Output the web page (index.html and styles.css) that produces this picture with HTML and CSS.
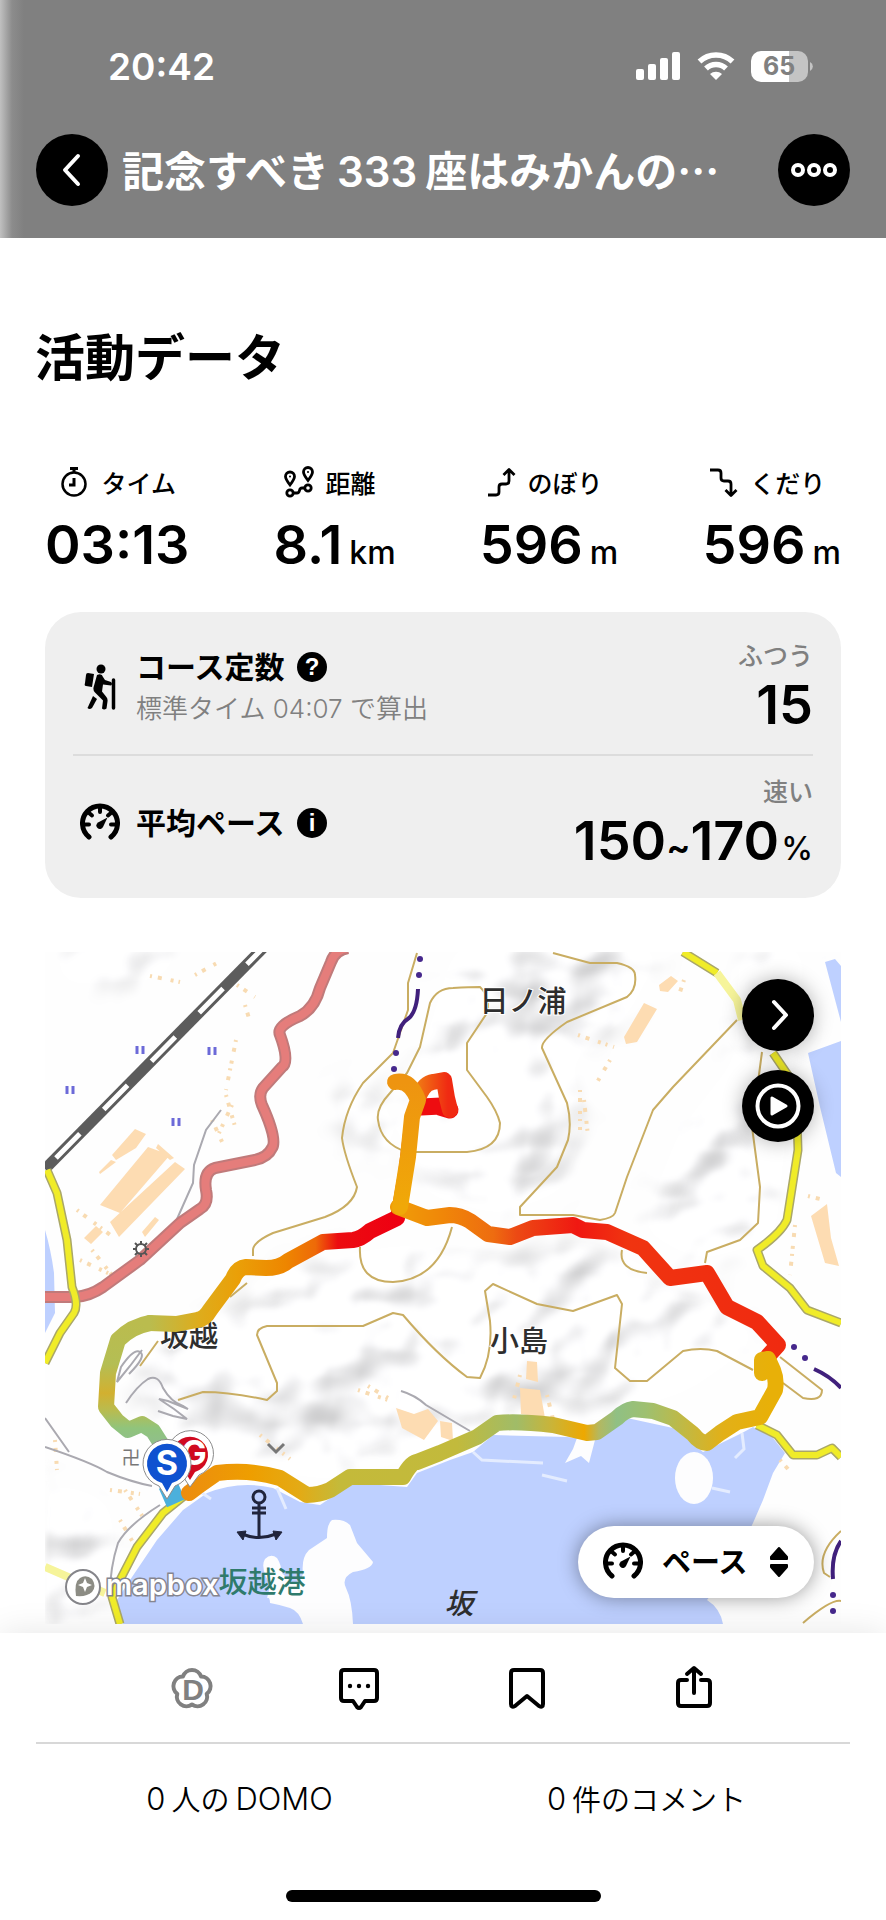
FILE: index.html
```html
<!DOCTYPE html>
<html lang="ja">
<head>
<meta charset="UTF-8">
<meta name="viewport" content="width=device-width, initial-scale=1.0">
<title>活動データ</title>
<link rel="stylesheet" href="styles.css">
</head>
<body>

<!-- shared icons -->
<svg class="sprite" aria-hidden="true">
  <symbol id="icon-gauge" viewBox="0 0 40 40">
    <path d="M9 34A17.500 17.500 0 1 1 31 34" fill="none" stroke="currentColor" stroke-width="5" stroke-linecap="round"/>
    <path d="M20 4v5M8.500 9.500l3.500 3M31.500 9.500l-3.500 3M3 21.500h6M37 21.500h-6" fill="none" stroke="currentColor" stroke-width="4" stroke-linecap="round"/>
    <path d="M27.500 14.500l-4.500 9.500a3.500 3.500 0 1 1-5-4.500z" fill="currentColor"/>
  </symbol>
</svg>

<header class="header">
  <div class="status-bar">
    <span class="clock">20:42</span>
    <div class="status-icons">
      <svg width="45" height="30" viewBox="0 0 45 30" fill="#fff">
        <rect x="0" y="18" width="8" height="11" rx="2"/>
        <rect x="12" y="13" width="8" height="16" rx="2"/>
        <rect x="24" y="7" width="8" height="22" rx="2"/>
        <rect x="36" y="1" width="8" height="28" rx="2"/>
      </svg>
      <svg width="38" height="30" viewBox="0 0 38 30">
        <path d="M2.500 10.500a24 24 0 0 1 33 0M9 17.500a14.500 14.500 0 0 1 20 0" fill="none" stroke="#fff" stroke-width="5.500"/>
        <path d="M13 23a9 9 0 0 1 12 0l-6 6z" fill="#fff"/>
      </svg>
      <svg width="62" height="32" viewBox="0 0 62 32">
        <path d="M10 1h28v31H10A10 10 0 0 1 0 22V11A10 10 0 0 1 10 1z" fill="#fff"/>
        <path d="M38 1h9a10 10 0 0 1 10 10v11a10 10 0 0 1-10 10h-9z" fill="#c4c4c4"/>
        <path d="M59 12a5 5 0 0 1 0 9z" fill="#c4c4c4"/>
        <text x="28" y="25" class="battery-text">65</text>
      </svg>
    </div>
  </div>
  <div class="nav-bar">
    <button type="button" class="round-btn" aria-label="戻る">
      <svg width="36" height="36" viewBox="0 0 36 36"><path d="M24 4L11 18l13 14" fill="none" stroke="#fff" stroke-width="4" stroke-linecap="round" stroke-linejoin="round"/></svg>
    </button>
    <h1 class="page-title">記念すべき<span class="num">333</span>座はみかんの⋯</h1>
    <button type="button" class="round-btn" aria-label="メニュー">
      <svg width="46" height="16" viewBox="0 0 46 16" fill="none" stroke="#fff" stroke-width="4">
        <circle cx="7" cy="8" r="5"/><circle cx="23" cy="8" r="5"/><circle cx="39" cy="8" r="5"/>
      </svg>
    </button>
  </div>
</header>

<main class="main">
  <h2 class="section-title">活動データ</h2>

  <div class="metrics">
    <div class="metric">
      <div class="metric-label">
        <svg width="32" height="32" viewBox="0 0 32 32" fill="none" stroke="#000" stroke-width="2.500">
          <circle cx="16" cy="18" r="11.500"/>
          <path d="M12 2.500h8M16 3v4M16 12v7h-5" stroke-width="3"/>
        </svg>
        <span>タイム</span>
      </div>
      <div class="metric-value">03:13</div>
    </div>
    <div class="metric with-unit">
      <div class="metric-label">
        <svg width="32" height="32" viewBox="0 0 32 32" fill="none" stroke="#000" stroke-width="2.800">
          <path d="M7 19C4 15 2.500 13 2.500 10.500a4.500 4.500 0 0 1 9 0C11.500 13 10 15 7 19z"/>
          <path d="M25 14.500c-3-4-4.500-6-4.500-8.500a4.500 4.500 0 0 1 9 0c0 2.500-1.500 4.500-4.500 8.500z"/>
          <circle cx="7" cy="27" r="3.200"/><circle cx="25" cy="22" r="3.200"/>
          <path d="M10 27h4q2 0 2.500-2.500T19 22h3"/>
          <circle cx="7" cy="10.500" r="1" fill="#000" stroke="none"/><circle cx="25" cy="6" r="1" fill="#000" stroke="none"/>
        </svg>
        <span>距離</span>
      </div>
      <div class="metric-value">8.1<span class="unit">km</span></div>
    </div>
    <div class="metric with-unit">
      <div class="metric-label">
        <svg width="32" height="32" viewBox="0 0 32 32" fill="none" stroke="#000" stroke-width="2.800" stroke-linejoin="round">
          <path d="M3 29h8q3 0 3-3v-5q0-3 3-3h4q3 0 3-3V4M18.500 9L24 3.500 29.500 9"/>
        </svg>
        <span>のぼり</span>
      </div>
      <div class="metric-value">596<span class="unit">m</span></div>
    </div>
    <div class="metric with-unit">
      <div class="metric-label">
        <svg width="32" height="32" viewBox="0 0 32 32" fill="none" stroke="#000" stroke-width="2.800" stroke-linejoin="round">
          <path d="M3 4h8q3 0 3 3v5q0 3 3 3h4q3 0 3 3v11M18.500 24l5.500 5.500 5.500-5.500"/>
        </svg>
        <span>くだり</span>
      </div>
      <div class="metric-value">596<span class="unit">m</span></div>
    </div>
  </div>

  <div class="card">
    <div class="card-row">
      <svg class="row-icon" width="40" height="46" viewBox="0 0 40 46">
        <circle cx="21" cy="5" r="4.500"/>
        <path d="M8 9l6 1-2 13-6-1q-2 0-1-3l1-8q0-2 2-2z"/>
        <path d="M17 11q5-2 6 2l2 3 6 2q2 2 0 3.500l-8-1-1 7 4 5q2 2 1.500 5l-1 7q-2.500 2-4.500 0l1-8-8-8q-2-2-1.500-5z"/>
        <path d="M13 32l4 3-5 9q-2.500 2-4.500 0z"/>
        <path d="M33.500 16v28" stroke="#000" stroke-width="3.500" stroke-linecap="round"/>
      </svg>
      <div class="row-text">
        <div class="row-title">コース定数
          <button type="button" class="info-btn" aria-label="コース定数とは">
            <svg width="30" height="30" viewBox="0 0 30 30"><circle cx="15" cy="15" r="15"/><text x="15" y="23" class="info-mark">?</text></svg>
          </button>
        </div>
        <div class="row-sub">標準タイム 04:07 で算出</div>
      </div>
      <div class="row-result">
        <div class="result-label">ふつう</div>
        <div class="result-value">15</div>
      </div>
    </div>
    <div class="card-row">
      <svg class="row-icon" width="40" height="40"><use href="#icon-gauge"/></svg>
      <div class="row-text">
        <div class="row-title">平均ペース
          <button type="button" class="info-btn" aria-label="平均ペースとは">
            <svg width="30" height="30" viewBox="0 0 30 30"><circle cx="15" cy="15" r="15"/><text x="15" y="23" class="info-mark">i</text></svg>
          </button>
        </div>
      </div>
      <div class="row-result">
        <div class="result-label">速い</div>
        <div class="result-value">150<span class="tilde">~</span>170<span class="percent">%</span></div>
      </div>
    </div>
  </div>

  <div class="map">
    <svg class="map-canvas" viewBox="45 952 796 672" role="img" aria-label="活動ルートの地図">
      <defs>
        <filter id="relief" x="0" y="0" width="100%" height="100%" color-interpolation-filters="sRGB">
          <feTurbulence type="fractalNoise" baseFrequency="0.009 0.010" numOctaves="3" seed="21" result="n"/>
          <feDiffuseLighting in="n" surfaceScale="38" diffuseConstant="1.400" lighting-color="#fff" result="light">
            <feDistantLight azimuth="235" elevation="52"/>
          </feDiffuseLighting>
          <feColorMatrix in="light" type="matrix" values="0.220 0 0 0 0.785  0 0.220 0 0 0.785  0 0 0.220 0 0.790  0 0 0 1 0" result="tone"/>
          <feGaussianBlur in="tone" stdDeviation="2" result="soft"/>
          <feGaussianBlur in="SourceAlpha" stdDeviation="14" result="mask"/>
          <feComposite in="soft" in2="mask" operator="in"/>
        </filter>
        <linearGradient id="t-west" gradientUnits="userSpaceOnUse" x1="0" y1="1323" x2="0" y2="1440">
          <stop offset="0" stop-color="#babc4e"/><stop offset=".35" stop-color="#b4be54"/><stop offset=".6" stop-color="#d2b030"/><stop offset=".75" stop-color="#b8bc50"/><stop offset=".9" stop-color="#90c47c"/><stop offset="1" stop-color="#90c088"/>
        </linearGradient>
        <linearGradient id="t-north" gradientUnits="userSpaceOnUse" x1="150" y1="0" x2="397" y2="0">
          <stop offset="0" stop-color="#babc4e"/><stop offset=".2" stop-color="#deac1c"/><stop offset=".35" stop-color="#eaa008"/><stop offset=".55" stop-color="#ee8600"/><stop offset=".67" stop-color="#ee6a08"/><stop offset=".76" stop-color="#ec0c10"/><stop offset="1" stop-color="#ee0012"/>
        </linearGradient>
        <linearGradient id="t-east" gradientUnits="userSpaceOnUse" x1="398" y1="0" x2="780" y2="0">
          <stop offset="0" stop-color="#f09c08"/><stop offset=".12" stop-color="#f08608"/><stop offset=".25" stop-color="#ee6c10"/><stop offset=".31" stop-color="#ec4a14"/><stop offset=".47" stop-color="#f01812"/><stop offset=".6" stop-color="#f03410"/><stop offset="1" stop-color="#f02a10"/>
        </linearGradient>
        <linearGradient id="t-coast" gradientUnits="userSpaceOnUse" x1="180" y1="0" x2="770" y2="0">
          <stop offset="0" stop-color="#ec8c10"/><stop offset=".12" stop-color="#ee9e00"/><stop offset=".2" stop-color="#e4aa14"/><stop offset=".27" stop-color="#c4ba3a"/><stop offset=".47" stop-color="#c2ba3c"/><stop offset=".57" stop-color="#a0bc68"/><stop offset=".63" stop-color="#cab438"/><stop offset=".685" stop-color="#eea800"/><stop offset=".71" stop-color="#b4b860"/><stop offset=".74" stop-color="#90c084"/><stop offset=".79" stop-color="#9ec070"/><stop offset=".86" stop-color="#c4b840"/><stop offset=".92" stop-color="#e2b018"/><stop offset="1" stop-color="#e8b008"/>
        </linearGradient>
        <linearGradient id="t-summit" gradientUnits="userSpaceOnUse" x1="0" y1="1082" x2="0" y2="1207">
          <stop offset="0" stop-color="#ee9410"/><stop offset="1" stop-color="#f0a808"/>
        </linearGradient>
        <linearGradient id="t-loop" gradientUnits="userSpaceOnUse" x1="418" y1="0" x2="448" y2="0">
          <stop offset="0" stop-color="#f07814"/><stop offset="1" stop-color="#f02a12"/>
        </linearGradient>
      </defs>

      <rect x="45" y="952" width="796" height="672" fill="#fefefe"/>

      <!-- hill shading -->
      <g filter="url(#relief)">
        <rect x="45" y="952" width="796" height="672" fill="none"/>
        <path d="M455 945L665 945 625 1020 570 1060 585 1120 565 1190 500 1215 425 1195 400 1120 420 1060zM740 945L805 945 775 1240 700 1260 640 1230 680 1130 735 1060zM55 945L190 945 160 980 60 985zM290 1265L400 1245 500 1255 590 1240 650 1270 710 1290 760 1340 690 1390 600 1420 500 1420 410 1460 330 1480 230 1465 150 1420 130 1370 180 1330 235 1310zM45 1480L110 1500 115 1560 85 1630 45 1630zM330 1090L380 1080 390 1170 350 1150z"/>
      </g>

      <!-- sea and islands -->
      <g fill="#bed0ff">
        <path d="M123 1624L117 1600 130 1580 157 1540 183 1510 207 1493Q240 1480 273 1488L300 1502 320 1505 353 1483 407 1487 417 1473 450 1460 473 1452 493 1435 567 1437 597 1440 627 1418 673 1428 703 1452 742 1433 753 1427 773 1438 785 1453 773 1473 763 1500 753 1523 730 1570 707 1600Q720 1608 723 1624z"/>
        <path d="M825 962l10-3 6 7v56zM808 1053l33-12v136l-5-4-16-66zM45 1230q6 20 9 43l1 40-10 20z"/>
      </g>
      <g fill="#fdfdfe">
        <path d="M332 1520q12-1 18 5l7 18 16 19q-1 7-20 10-12 6-7 16 6 12 7 36h-50q-4-13-13-16-9-3-20-5 0-6-3-5 5-13-1-21-5-12-1-18 6-6 12-1 4 6 5 15l10 10q8 1 11-9-2-16 6-24l18-12q0-15 5-18z"/>
        <ellipse cx="694" cy="1478" rx="19" ry="26"/>
        <path d="M577 1438l18 2-6 23-8-7-16 7 8-14z"/>
      </g>
      <path d="M473 1452l9 8 61 3M542 1475l25 6M712 1488l18 4M742 1433l2 16-9 9M202 1493l9 6M277 1488l9 21" fill="none" stroke="#e4ecff" stroke-width="3"/>

      <!-- buildings -->
      <g fill="#fddcb2">
        <path d="M112 1155l23-26 11 5-10 14-20 12zM100 1205l48-58 22 8-50 58zM110 1222l65-60 10 7-66 68zM99 1172l12-12 5 2-16 12zM142 1232l13-15 4 3-14 17zM84 1238l12-12 7 6-12 12zM158 1144l16 14-4 2-14-12z"/>
        <path d="M624 1037l20-34 13 6-20 33-11 2zM659 985l12-9 7 5-10 11-8-1zM811 1216l16-12 4 34 8 28-14-3zM527 1361l10 1 1 20-12-3zM520 1388l20 2 5 28-24-4zM396 1408l18 6 14-5 10 12-14 19-22-12zM440 1421l12 2 1 18-12-4z"/>
      </g>
      <g fill="none" stroke="#f8dbb2" stroke-width="4" stroke-dasharray="2 6 4 9 3 5">
        <path d="M150 976l30 6M195 975l22-12M237 985l18 12M245 1005l6 20M236 1040l-10 50M232 1105l-14 30M212 1120l12 26M226 1095l10 35M77 1210l40 30M92 1250l20 25M80 1260l30 14M578 1035l36 12M610 1060l-14 24M580 1090v40M584 1100l4 36M795 1225l-5 50M808 1196l16 4M125 1490l20 30M120 1520l14 24M110 1490l30 4M358 1390l30 10M368 1386l20 12M260 1435l30 24M55 1440l2 30M520 1375l-6 24M547 1395l6 24M780 1460l8 9M684 980l-4 12"/>
      </g>

      <!-- minor roads and contour lines -->
      <g fill="none" stroke="#aaa9b0" stroke-width="2">
        <path d="M221 1110l-15 20-12 35-1 18-16 36M45 1418l24 34M45 1447q45 15 62 25 24 10 45 14M160 1505q-32 20-42 38-8 25-8 50M401 1391q14 4 25 14l44 26"/>
        <path d="M142 1350l-12 16-13 16 4-15q13-19 19-15 7 4-11 22M126 1403q11-17 22-24 10-5 15 9 8 14 20 18l5 3-20-8-9-2 15 10 13 10-14-3-15-5"/>
      </g>
      <g fill="none" stroke="#c9ad62" stroke-width="2" stroke-linejoin="round">
        <path d="M417 953l-9 30v27l-15 43-30 30q-18 26-21 55 2 16 15 49-3 19-32 30l-52 16q-20 9-20 17v6M247 1283l-17 14"/>
        <path d="M453 988q-16 0-23 15l-10 44-13 26-17 20q-14 15-12 27 3 24 29 32h60q33-3 33-29-3-12-13-26l-20-27v-27l20-30q4-16-7-26-10 0-27 1"/>
        <path d="M553 953l37 10h27q18 4 18 12 2 14-8 22l-60 25q-26 18-25 26l25 55q5 20 1 37l-11 27-37 40v8h53l27 5q13-2 15-7l12-36 26-67 20-23 64-67"/>
        <path d="M762 1052l-10 75 8 60-2 36-18 17-33 12-2 11M360 1247q-2 35 33 35 45-2 59-55M622 1250q-4 20 25 23"/>
        <path d="M178 1400l25-8q28 0 64 8l10-9v-8l-20-48q0-7 10-9h96l30-13 10 2q34 40 64 62l13 1q13-24 10-57l-5-30 8-7 44 20 36 7 44-16 5 9-7 64 15 13h17l36-30q18-4 34 0l36 19M780 1357l42 33q0 12-19 8l-20-15M158 1341l-18 25M841 1531q-24 22-17 42l6 4M841 1601q-10-2-38 22"/>
      </g>

      <!-- railway -->
      <path d="M45 1169L265 946" fill="none" stroke="#5c5c5c" stroke-width="11"/>
      <path d="M56 1158L262 949" fill="none" stroke="#fff" stroke-width="5" stroke-dasharray="34 34"/>

      <!-- national road -->
      <g fill="none" stroke-linejoin="round">
        <path d="M348 948Q335 950 331 962L320 988Q315 1008 300 1016 276 1026 280 1035 290 1062 282 1067L263 1088Q258 1095 262 1105 278 1140 272 1148 268 1157 255 1160L215 1168Q203 1172 206 1190 209 1204 200 1209L180 1223 140 1260 103 1287Q90 1296 75 1297L45 1297" stroke="#c07a7a" stroke-width="12"/>
        <path d="M348 948Q335 950 331 962L320 988Q315 1008 300 1016 276 1026 280 1035 290 1062 282 1067L263 1088Q258 1095 262 1105 278 1140 272 1148 268 1157 255 1160L215 1168Q203 1172 206 1190 209 1204 200 1209L180 1223 140 1260 103 1287Q90 1296 75 1297L45 1297" stroke="#e57d7b" stroke-width="8"/>
      </g>

      <!-- prefectural roads -->
      <g fill="none" stroke="#aaa768" stroke-width="9" stroke-linejoin="round">
        <path d="M47 1170l10 23 10 47 5 47q7 18 2 26l-14 20-15 30M188 1493l-25 20-26 34-17 33-8 17 8 27M683 952l34 21M773 1053l17 25q8 40 8 72l-11 70q-6 13-30 30l6 16 27 22 17 22 34 13M757 1425l20 10 16 20h24l15-7 9 9"/>
      </g>
      <g fill="none" stroke="#f0ec28" stroke-width="6" stroke-linejoin="round">
        <path d="M47 1170l10 23 10 47 5 47q7 18 2 26l-14 20-15 30M188 1493l-25 20-26 34-17 33-8 17 8 27M683 952l34 21M773 1053l17 25q8 40 8 72l-11 70q-6 13-30 30l6 16 27 22 17 22 34 13M757 1425l20 10 16 20h24l15-7 9 9"/>
        <path d="M717 973l20 27 5 20M45 1567l60 26" stroke="#f6f49a" stroke-width="8"/>
      </g>

      <!-- municipal border -->
      <g fill="none" stroke="#40207c" stroke-width="4">
        <path d="M418 989q-1 22-9 29-10 6-11 20M814 1369q16 7 27 19M841 1541q-10 14-8 38"/>
      </g>
      <g fill="#46288c">
        <circle cx="420" cy="959" r="3"/><circle cx="419" cy="975" r="3"/><circle cx="396" cy="1053" r="3"/><circle cx="394" cy="1069" r="3"/>
        <circle cx="794" cy="1347" r="3"/><circle cx="805" cy="1358" r="3"/><circle cx="833" cy="1595" r="3"/><circle cx="833" cy="1611" r="3"/>
      </g>

      <!-- rice fields -->
      <path d="M137 1046v8M143 1046v8M209 1047v8M215 1047v8M67 1086v8M73 1086v8M173 1118v8M179 1118v8" stroke="#6c6ad8" stroke-width="3"/>

      <!-- factory, field and temple marks -->
      <circle cx="141" cy="1249" r="5" fill="none" stroke="#555" stroke-width="2"/>
      <path d="M141 1241v3M141 1254v3M133 1249h3M146 1249h3M135 1243l3 3M147 1255l-3-3M147 1243l-3 3M135 1255l3-3" stroke="#555" stroke-width="2"/>
      <path d="M268 1444l8 8 8-8" fill="none" stroke="#777" stroke-width="3"/>
      <text x="131" y="1465" class="map-mark">卍</text>

      <!-- harbour -->
      <g fill="none" stroke="#20243c" stroke-width="3">
        <circle cx="259" cy="1497" r="6"/>
        <path d="M259 1503v34M252 1508h14M252 1513h14M242 1534q17 7 34 0"/>
        <path d="M237 1532l9-1-3 9zM282 1532l-9-1 3 9z" fill="#20243c" stroke-width="1"/>
      </g>

      <text x="523" y="1012" class="map-label">日ノ浦</text>
      <text x="189" y="1347" class="map-label">坂越</text>
      <text x="519" y="1352" class="map-label">小島</text>
      <text x="459" y="1614" class="map-label italic">坂</text>
      <text x="262" y="1593" class="map-label port">坂越港</text>

      <!-- GPS track coloured by pace -->
      <g fill="none" stroke-width="16" stroke-linecap="round" stroke-linejoin="round">
        <path d="M163 1498l18-8" stroke="#4cb0dc" stroke-width="20" stroke-linecap="butt"/>
        <path d="M397 1218l11-61M412 1117l-9 73" stroke="#d4380c" stroke-width="14"/>
        <path d="M421 1107l20-1M440 1107l10 3" stroke="#ee0c10" stroke-width="17"/>
        <path d="M418 1098q6-15 15-16l11-2 3 18 3 12" stroke="url(#t-loop)"/>
        <path d="M167 1453l-14-22-11-7-14 6-11-9-11-14 2-34 10-33q14-14 32-17" stroke="url(#t-west)"/>
        <path d="M150 1323l26 1 21-4q8-1 13-10l23-31q4-11 13-12l20 1q14 0 22-7l35-19 30-2q8-1 17-9l27-13" stroke="url(#t-north)"/>
        <path d="M398 1207l29 11 23-3q10 0 20 6l18 13 22 3 23-9 40-3 10 5 24 2 36 16 27 30 37-5 20 34 30 15 21 23-10 11" stroke="url(#t-east)"/>
        <path d="M395 1082q15-3 23 18l-6 17-4 40-8 50" stroke="url(#t-summit)"/>
        <path d="M762 1373v-13l6-1 5 11q4 10 2 20l-15 27-23 5-17 11-13 10q-7 0-14-9l-20-16-20-7-20-2q-8 1-16 9l-20 14-10 1-34-8q-35-4-56-2l-20 14-37 16-23 9q-6 0-14 15l-53 0-20 13q-11 5-23 5l-27-17q-30-9-63-5l-20 14-8 6" stroke="url(#t-coast)"/>
      </g>

      <!-- goal and start pins -->
      <g>
        <path d="M190 1487l-8-12a23 23 0 1 1 17 0z" fill="#fff" stroke="#8b8b8b" stroke-width="1"/>
        <path d="M190 1480l-5-8a18 18 0 1 1 10 0z" fill="#d00a20"/>
        <text x="194" y="1465" class="pin-text">G</text>
        <path d="M167 1499l-8-13a24 24 0 1 1 16 0z" fill="#fff" stroke="#8b8b8b" stroke-width="1"/>
        <path d="M167 1492l-5-9a20 20 0 1 1 10 0z" fill="#0f52d0"/>
        <text x="167" y="1475" class="pin-text">S</text>
      </g>

      <!-- map credit -->
      <circle cx="83" cy="1587" r="17" fill="#fff" stroke="#85858a" stroke-width="2"/>
      <path d="M76 1596q-2-14 4-18 6-4 12 1 5 7 0 13-5 5-16 4z" fill="#8c8c84"/>
      <path d="M85 1578l2 5 5 2-5 2-2 5-2-5-5-2 5-2z" fill="#fff"/>
      <text x="106" y="1595" class="map-credit">mapbox</text>
    </svg>

    <div class="map-buttons">
      <button type="button" class="round-btn floating" aria-label="地図を開く">
        <svg width="36" height="36" viewBox="0 0 36 36"><path d="M14 5l12 13-12 13" fill="none" stroke="#fff" stroke-width="4" stroke-linecap="round" stroke-linejoin="round"/></svg>
      </button>
      <button type="button" class="round-btn floating" aria-label="再生">
        <svg width="46" height="46" viewBox="0 0 46 46"><circle cx="23" cy="23" r="20.500" fill="none" stroke="#fff" stroke-width="4"/><path d="M17 15v16l14-8z" fill="#fff" stroke="#fff" stroke-width="3" stroke-linejoin="round"/></svg>
      </button>
    </div>

    <label class="pace-select">
      <svg width="40" height="40"><use href="#icon-gauge"/></svg>
      <select name="layer" aria-label="ルートの色分け">
        <option>ペース</option>
        <option>標高</option>
      </select>
      <svg width="20" height="32" viewBox="0 0 20 32"><path d="M10 2l8 9v2H2v-2zM10 30l8-9v-2H2v2z" stroke="#000" stroke-width="2" stroke-linejoin="round"/></svg>
    </label>
  </div>
</main>

<footer class="footer">
  <div class="actions">
    <button type="button" class="action-btn" aria-label="DOMOをおくる">
      <svg width="48" height="48" viewBox="0 0 48 48">
        <path d="M14.900 12.500a9.600 9.600 0 0 1 18.200 0a9.600 9.600 0 0 1 5.600 17.300a9.600 9.600 0 0 1-14.700 10.700a9.600 9.600 0 0 1-14.700-10.700a9.600 9.600 0 0 1 5.600-17.300z" fill="none" stroke="#808080" stroke-width="4" stroke-linejoin="round"/>
        <text x="25" y="36" class="domo-text">D</text>
      </svg>
    </button>
    <button type="button" class="action-btn" aria-label="コメント">
      <svg width="48" height="48" viewBox="0 0 48 48">
        <path d="M9 6h30q3 0 3 3v25q0 3-3 3h-9l-4 6q-2 2-4 0l-4-6H9q-3 0-3-3V9q0-3 3-3z" fill="none" stroke="#000" stroke-width="4" stroke-linejoin="round"/>
        <circle cx="15" cy="22" r="2.200"/><circle cx="24" cy="22" r="2.200"/><circle cx="33" cy="22" r="2.200"/>
      </svg>
    </button>
    <button type="button" class="action-btn" aria-label="保存">
      <svg width="48" height="48" viewBox="0 0 48 48">
        <path d="M11 6h26q3 0 3 3v31q0 4-4 2l-12-10-12 10q-4 2-4-2V9q0-3 3-3z" fill="none" stroke="#000" stroke-width="4" stroke-linejoin="round"/>
      </svg>
    </button>
    <button type="button" class="action-btn" aria-label="共有">
      <svg width="48" height="48" viewBox="0 0 48 48">
        <path d="M17 16h-6q-3 0-3 3v20q0 3 3 3h26q3 0 3-3V19q0-3-3-3h-6M24 29V5M17 10l7-6 7 6" fill="none" stroke="#000" stroke-width="4" stroke-linecap="round" stroke-linejoin="round"/>
      </svg>
    </button>
  </div>
  <div class="counts">
    <a href="#domo"><span class="count">0</span>人の<span class="word">DOMO</span></a>
    <a href="#comments"><span class="count">0</span>件のコメント</a>
  </div>
  <div class="home-indicator"></div>
</footer>

</body>
</html>
```
FILE: styles.css
```css
* {
  box-sizing: border-box;
}

body {
  margin: 0;
  min-height: 100vh;
  display: flex;
  flex-direction: column;
  background: #fff;
  color: #000;
  font-family: Inter, "Noto Sans CJK JP", sans-serif;
}

button {
  padding: 0;
  border: none;
  background: none;
  cursor: pointer;
}

svg {
  display: block;
  flex: none;
}

.sprite {
  position: absolute;
  width: 0;
  height: 0;
}

/* Header */
.header {
  padding: 0 36px 32px;
  background: linear-gradient(to right, #c0c0c0 0, #8c8c8c 12px, #808080 24px);
  color: #fff;
}

.status-bar {
  display: flex;
  align-items: center;
  justify-content: space-between;
  height: 134px;
  padding: 0 37px 2px 72px;
}

.clock {
  font-size: 37px;
  font-weight: 600;
}

.status-icons {
  display: flex;
  align-items: center;
  gap: 16px;
}

.battery-text {
  font-size: 25px;
  font-weight: 700;
  text-anchor: middle;
  fill: #808080;
}

.nav-bar {
  display: flex;
  align-items: center;
  gap: 14px;
}

.round-btn {
  display: flex;
  align-items: center;
  justify-content: center;
  flex: none;
  width: 72px;
  height: 72px;
  border-radius: 50%;
  background: #000;
}

.page-title {
  flex: 1;
  margin: 0;
  font-family: "Noto Sans CJK JP", sans-serif;
  font-size: 42px;
  font-weight: 700;
  line-height: 60px;
  white-space: nowrap;
  overflow: hidden;
}

.page-title .num {
  margin: 0 8px;
  font-family: Inter, sans-serif;
  font-weight: 600;
}

/* Activity data */
.main {
  padding: 90px 45px 9px;
}

.section-title {
  margin: 0 -10px 78px;
  font-size: 50px;
  font-weight: 700;
  line-height: 60px;
}

.metrics {
  display: flex;
  justify-content: space-between;
  margin-bottom: 35px;
}

.metric-label {
  display: flex;
  align-items: center;
  justify-content: center;
  gap: 11px;
  height: 32px;
  margin-bottom: 15px;
  font-size: 25px;
  font-weight: 500;
}

.with-unit .metric-label {
  padding-right: 11px;
}

.metric-value {
  font-size: 54px;
  font-weight: 600;
  line-height: 64px;
}

.unit {
  margin-left: 7px;
  font-size: 32px;
  font-weight: 500;
  line-height: 32px;
}

.card {
  margin-bottom: 54px;
  padding: 8px 28px;
  border-radius: 36px;
  background: #efefef;
}

.card-row {
  display: flex;
  align-items: center;
  height: 134px;
}

.card-row + .card-row {
  height: 136px;
  border-top: 2px solid #dcdcdc;
}

.row-icon {
  margin: 0 16px 0 7px;
}

.row-text {
  flex: 1;
}

.row-title {
  display: flex;
  align-items: center;
  gap: 12px;
  font-size: 30px;
  font-weight: 700;
  line-height: 44px;
}

.info-mark {
  font-size: 24px;
  font-weight: 800;
  text-anchor: middle;
  fill: #fff;
}

.row-sub {
  color: #808080;
  font-size: 26px;
  font-weight: 350;
  line-height: 40px;
}

.row-result {
  text-align: right;
}

.result-label {
  color: #808080;
  font-size: 25px;
  font-weight: 500;
  line-height: 36px;
}

.result-value {
  font-size: 54px;
  font-weight: 600;
  line-height: 62px;
}

.tilde {
  font-size: 36px;
  line-height: 36px;
}

.percent {
  margin-left: 2px;
  font-size: 32px;
  font-weight: 500;
  line-height: 32px;
}

/* Map */
.map {
  position: relative;
}

.map-canvas {
  width: 100%;
  height: auto;
}

.map-label {
  font-family: "Noto Sans CJK JP", sans-serif;
  font-size: 29px;
  font-weight: 500;
  text-anchor: middle;
  fill: #2e2e2e;
  stroke: #fff;
  stroke-width: 2px;
  paint-order: stroke;
}

.map-label.italic {
  font-style: italic;
  stroke: none;
}

.map-label.port {
  fill: #2f7a6c;
  stroke: none;
}

.map-mark {
  font-family: "Noto Sans CJK JP", sans-serif;
  font-size: 19px;
  text-anchor: middle;
  fill: #777;
}

.pin-text {
  font-size: 34px;
  font-weight: 700;
  text-anchor: middle;
  fill: #fff;
}

.map-credit {
  font-size: 29px;
  font-weight: 600;
  fill: #fff;
  stroke: #85858f;
  stroke-width: 3px;
  paint-order: stroke;
}

.map-buttons {
  position: absolute;
  top: 27px;
  right: 27px;
  display: flex;
  flex-direction: column;
  gap: 19px;
}

.floating {
  box-shadow: 0 0 20px rgba(0, 0, 0, 0.3);
}

.pace-select {
  position: absolute;
  right: 27px;
  bottom: 26px;
  display: flex;
  align-items: center;
  gap: 19px;
  height: 72px;
  padding: 0 25px;
  border-radius: 36px;
  background: #fff;
  box-shadow: 0 0 20px rgba(0, 0, 0, 0.4);
}

.pace-select select {
  appearance: none;
  padding: 0;
  border: none;
  background: none;
  color: #000;
  font-family: inherit;
  font-size: 29px;
  font-weight: 700;
}

/* Bottom bar */
.footer {
  position: sticky;
  bottom: 0;
  margin-top: auto;
  padding: 0 36px 18px;
  background: #fff;
  box-shadow: 0 0 32px rgba(0, 0, 0, 0.1);
}

.actions {
  display: flex;
  height: 111px;
  padding: 0 72px;
  border-bottom: 2px solid #d8d8d8;
}

.action-btn {
  display: flex;
  align-items: center;
  justify-content: center;
  flex: 1;
}

.domo-text {
  font-size: 30px;
  font-weight: 800;
  text-anchor: middle;
  fill: #808080;
}

.counts {
  display: flex;
  height: 108px;
  margin-bottom: 38px;
}

.counts a {
  display: flex;
  align-items: center;
  justify-content: center;
  flex: 1;
  color: #000;
  font-size: 29px;
  font-weight: 350;
  text-decoration: none;
}

.count {
  margin-right: 6px;
  font-size: 31px;
}

.word {
  margin-left: 6px;
  font-size: 31px;
}

.home-indicator {
  width: 315px;
  height: 12px;
  margin: 0 auto;
  border-radius: 6px;
  background: #000;
}
```
